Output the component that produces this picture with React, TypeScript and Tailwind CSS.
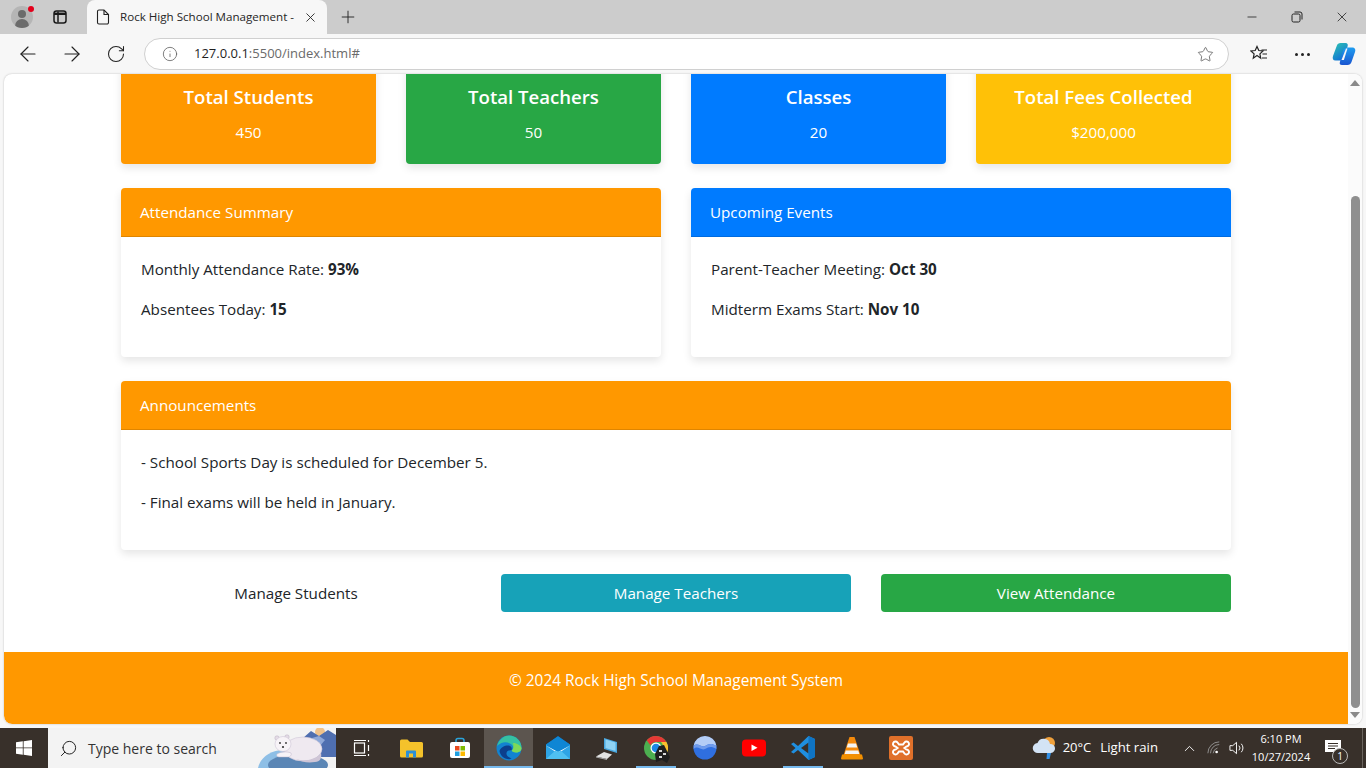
import { ArrowLeft, ArrowRight, ChevronUp, Info, Plus, RotateCw, Search, Star, X, Minus } from "lucide-react";
import type { ReactNode } from "react";

const stats = [
  { title: "Total Students", value: "450", color: "bg-[#ff9800]" },
  { title: "Total Teachers", value: "50", color: "bg-[#28a745]" },
  { title: "Classes", value: "20", color: "bg-[#007bff]" },
  { title: "Total Fees Collected", value: "$200,000", color: "bg-[#ffc107]" },
];

function Panel({ title, color, children }: { title: string; color: string; children: ReactNode }) {
  return (
    <div className="bg-white rounded-[4px] shadow-[0_4px_8px_rgba(0,0,0,0.1)] overflow-hidden">
      <div className={`h-[49px] flex items-center pl-[19px] pr-5 text-white border-b border-[rgba(0,0,0,0.125)] ${color}`}>{title}</div>
      <div className="h-[120px] px-5 pt-[20px] text-[#212529]">{children}</div>
    </div>
  );
}

function Row({ children }: { children: ReactNode }) {
  return <p className="h-[24px] mb-4 leading-[24px]">{children}</p>;
}

function BrowserChrome() {
  return (
    <div className="h-[74px] shrink-0 bg-[#f7f7f7]">
      {/* tab strip */}
      <div className="h-[34px] bg-[#cccccc] flex items-end relative">
        <div className="w-[87px] h-[34px] flex items-center shrink-0">
          <div className="relative ml-[11px] w-[22px] h-[22px] rounded-full bg-[#b5b5b5] overflow-hidden">
            <div className="absolute left-[7px] top-[4px] w-[8px] h-[8px] rounded-full bg-[#6b6b6b]" />
            <div className="absolute left-[4px] top-[13px] w-[14px] h-[10px] rounded-t-full bg-[#6b6b6b]" />
          </div>
          <div className="absolute left-[28px] top-[6px] w-[6px] h-[6px] rounded-full bg-[#e3001b]" />
          <svg className="ml-[19px]" width="16" height="16" viewBox="0 0 16 16" fill="none" stroke="#1a1a1a" strokeWidth="1.5">
            <rect x="2" y="2" width="12" height="12" rx="2.5" />
            <path d="M6 2.500v11" />
            <path d="M2 4.800h12" strokeWidth="2.400" />
          </svg>
        </div>
        <div className="w-[240px] h-[34px] bg-[#f7f7f7] rounded-t-lg flex items-center pl-[9px] pr-[9px] relative">
          <svg width="14" height="16" viewBox="0 0 14 16" fill="none" stroke="#222" strokeWidth="1.1">
            <path d="M1.500 2.500a1.500 1.500 0 0 1 1.500-1.500h5l4.500 4.500V13.500a1.500 1.500 0 0 1-1.500 1.500H3a1.500 1.500 0 0 1-1.500-1.500z" />
            <path d="M8 1v4.500h4.500" />
          </svg>
          <span className="ml-[10px] text-[11.6px] text-[#262626] whitespace-nowrap">Rock High School Management -</span>
          <X className="ml-auto text-[#222]" size={15} strokeWidth={1.4} />
        </div>
        <Plus className="ml-[11px] mb-[7px] text-[#222]" size={20} strokeWidth={1.1} />
        <div className="ml-auto h-[34px] flex items-center text-[#222]">
          <Minus size={14} strokeWidth={1.4} />
          <svg className="ml-[32px]" width="12" height="12" viewBox="0 0 12 12" fill="none" stroke="#222" strokeWidth="1">
            <rect x="1" y="3" width="8" height="8" rx="1.500" />
            <path d="M3.500 1h5.500a2 2 0 0 1 2 2v5.500" />
          </svg>
          <X className="ml-[31px] mr-[16px]" size={16} strokeWidth={1.2} />
        </div>
      </div>
      {/* address bar */}
      <div className="h-[40px] flex items-center text-[#222]">
        <ArrowLeft className="ml-[16px]" size={24} strokeWidth={1.15} />
        <ArrowRight className="ml-[20px]" size={24} strokeWidth={1.15} />
        <RotateCw className="ml-[22px]" size={20} strokeWidth={1.25} />
        <div className="ml-[18px] w-[1085px] h-[32px] rounded-full bg-white border border-[#d0d0d0] flex items-center pl-[17px] pr-[14px]">
          <Info className="text-[#5f5f5f]" size={16} strokeWidth={1.2} />
          <span className="ml-[16px] text-[13px] text-[#1f1f1f]">127.0.0.1<span className="text-[#6a6a6a]">:5500/index.html#</span></span>
          <Star className="ml-auto text-[#555]" size={17} strokeWidth={1.1} />
        </div>
        <svg className="ml-[21px]" width="18" height="18" viewBox="0 0 18 18" fill="none" stroke="#222" strokeWidth="1.2">
          <path d="M7 1.500l1.800 4 4.200.5-3.100 2.900.8 4.300L7 10.600l-3.700 2.600.8-4.300L1 6l4.200-.5z" />
          <path d="M11.500 5h5.500M12.500 9h4.500M12 13h5" />
        </svg>
        <div className="ml-[27px] flex gap-[3px]">
          <div className="w-[3px] h-[3px] rounded-full bg-[#222]" />
          <div className="w-[3px] h-[3px] rounded-full bg-[#222]" />
          <div className="w-[3px] h-[3px] rounded-full bg-[#222]" />
        </div>
        <svg className="ml-[22px]" width="24" height="24" viewBox="0 0 24 24">
          <defs>
            <linearGradient id="copilotLeft" x1="0" y1="0" x2="0.6" y2="1">
              <stop offset="0" stopColor="#2fc7b0" />
              <stop offset="1" stopColor="#0f6fd8" />
            </linearGradient>
            <linearGradient id="copilotRight" x1="0.5" y1="0" x2="0.5" y2="1">
              <stop offset="0" stopColor="#1f9df0" />
              <stop offset="1" stopColor="#1a55d0" />
            </linearGradient>
          </defs>
          <path d="M8.500 1h5c2 0 2.700 1.300 2.100 3.200L12.500 15c-.8 2.600-2 3.500-4 3.500H3.500C1 18.500.2 16.500 1 14L4.800 3.800C5.400 2 6.700 1 8.500 1z" fill="url(#copilotLeft)" />
          <path d="M15.500 5.500h4.500c2.800 0 4 2 3 4.500L19.500 20c-.7 2-2 3-4 3H10c-2 0-2.700-1-2.100-3L11 9c.7-2.300 2.200-3.500 4.500-3.500z" fill="url(#copilotRight)" />
          <path d="M14 6.500h1.500l-3.600 11.500H9.500z" fill="#f7f7f7" />
        </svg>
      </div>
    </div>
  );
}

function Page() {
  return (
    <div className="flex-1 min-h-0 flex px-[4px] pb-[4px] bg-[#f7f7f7]">
      <div className="flex-1 min-w-0 bg-white rounded-lg shadow-[0_0_2px_rgba(0,0,0,0.25)] overflow-hidden flex">
        <div className="flex-1 min-w-0 flex flex-col justify-end overflow-hidden font-['Open_Sans',sans-serif] text-[15.2px]">
          <div className="shrink-0 px-[117px]">
            <div className="grid grid-cols-4 gap-[30px]">
              {stats.map((s) => (
                <div key={s.title} className={`h-[120px] rounded-[4px] text-white text-center shadow-[0_4px_8px_rgba(0,0,0,0.1)] flex flex-col items-center pt-[41px] ${s.color}`}>
                  <h3 className="text-[18.6px] font-semibold leading-[24px]">{s.title}</h3>
                  <p className="mt-[11px] leading-[24px]">{s.value}</p>
                </div>
              ))}
            </div>
            <div className="grid grid-cols-2 gap-[30px] mt-[24px]">
              <Panel title="Attendance Summary" color="bg-[#ff9800]">
                <Row>Monthly Attendance Rate: <b>93%</b></Row>
                <Row>Absentees Today: <b>15</b></Row>
              </Panel>
              <Panel title="Upcoming Events" color="bg-[#007bff]">
                <Row>Parent-Teacher Meeting: <b>Oct 30</b></Row>
                <Row>Midterm Exams Start: <b>Nov 10</b></Row>
              </Panel>
            </div>
            <div className="mt-[24px]">
              <Panel title="Announcements" color="bg-[#ff9800]">
                <Row>- School Sports Day is scheduled for December 5.</Row>
                <Row>- Final exams will be held in January.</Row>
              </Panel>
            </div>
            <div className="grid grid-cols-3 gap-[30px] mt-[24px]">
              <div className="h-[38px] flex items-center justify-center text-[#212529]">Manage Students</div>
              <div className="h-[38px] rounded-[4px] bg-[#17a2b8] text-white flex items-center justify-center">Manage Teachers</div>
              <div className="h-[38px] rounded-[4px] bg-[#28a745] text-white flex items-center justify-center">View Attendance</div>
            </div>
          </div>
          <div className="shrink-0 mt-[40px] h-[72px] bg-[#ff9800] text-white text-[15.4px] leading-[24px] pt-[17px] text-center rounded-bl-lg">© 2024 Rock High School Management System</div>
        </div>
        {/* scrollbar */}
        <div className="w-[14px] shrink-0 bg-[#fbfbfb] flex flex-col items-center">
          <div className="mt-[6px] w-0 h-0 border-x-[5px] border-x-transparent border-b-[6px] border-b-[#8a8a8a]" />
          <div className="mt-[110px] w-[9px] flex-1 rounded-full bg-[#8f8f8f]" />
          <div className="mt-[4px] mb-[6px] w-0 h-0 border-x-[5px] border-x-transparent border-t-[6px] border-t-[#8a8a8a]" />
        </div>
      </div>
    </div>
  );
}

const apps: { key: string; icon: ReactNode; bar?: string; active?: boolean }[] = [
  {
    key: "taskview",
    icon: (
      <svg width="18" height="18" viewBox="0 0 18 18" fill="none" stroke="#fff" strokeWidth="1.2">
        <rect x="1.500" y="4" width="10" height="10" />
        <path d="M1 1.500h12M1 16.500h12M15.500 1v2M15.500 6v6M15.500 15v2" />
      </svg>
    ),
  },
  {
    key: "files",
    icon: (
      <svg width="24" height="20" viewBox="0 0 24 20">
        <path d="M1 3a1.500 1.500 0 0 1 1.500-1.500h6L11 4h11.500A1.500 1.500 0 0 1 24 5.500V18a1.500 1.500 0 0 1-1.500 1.500h-20A1.500 1.500 0 0 1 1 18z" fill="#f4c22b" />
        <path d="M7 19.500v-6a1 1 0 0 1 1-1h8a1 1 0 0 1 1 1v6h-3v-4h-4v4z" fill="#2b8fd6" />
      </svg>
    ),
  },
  {
    key: "store",
    icon: (
      <svg width="22" height="22" viewBox="0 0 22 22">
        <rect x="1" y="5" width="20" height="16" rx="2" fill="#fff" />
        <path d="M7 5V3.500A2 2 0 0 1 9 1.500h4a2 2 0 0 1 2 2V5" fill="none" stroke="#2aa5dc" strokeWidth="1.500" />
        <rect x="6" y="9" width="4.500" height="4.500" fill="#e8491d" />
        <rect x="11.500" y="9" width="4.500" height="4.500" fill="#7fba00" />
        <rect x="6" y="14.500" width="4.500" height="4.500" fill="#1f9fe0" />
        <rect x="11.500" y="14.500" width="4.500" height="4.500" fill="#fdb900" />
      </svg>
    ),
  },
  {
    key: "edge",
    active: true,
    bar: "w-full bg-[#76b9ed]",
    icon: (
      <svg width="26" height="26" viewBox="0 0 26 26">
        <circle cx="13" cy="13" r="12.500" fill="#1283d0" />
        <path d="M1 11C3 3.500 9 .5 13 .5 20 .5 25.500 6 25.500 13c0 3-2.500 4.500-5.500 4.500-2.500 0-4-1-4.500-2 2-1 2.500-3 1-5C14 7.500 9 6.500 5.500 8 3.500 8.800 2 10 1 11z" fill="#35c1a2" />
        <path d="M17 8c3 0 7 1.500 8.500 5 0 3-2.500 4.500-5.500 4.500-2 0-3.500-.7-4.500-2 2-1 2.500-4 1.500-7.500z" fill="#7ed957" />
        <path d="M12 10.500c3 0 4.500 2.500 3.500 5C14 15 10 15.500 10.500 19c.3 2 2.500 3.500 5 4.500-1 .5-2 .8-2.500.8-5 0-9-4-9.500-8.300C4.500 12.500 8.500 10.500 12 10.500z" fill="#0c3f8c" />
      </svg>
    ),
  },
  {
    key: "mail",
    icon: (
      <svg width="24" height="24" viewBox="0 0 24 24">
        <path d="M0 8.500 12 0l12 8.500V23H0z" fill="#0a78c8" />
        <path d="M0 9h24v14H0z" fill="#2ea4e6" />
        <path d="M0 9l12 8 12-8v-.5L12 .5 0 8.500z" fill="#0f86d4" />
        <path d="M3 9l9-6 9 6-9 6z" fill="#0f86d4" />
        <path d="M0 9.500 12 17.500 24 9.500 12 16z" fill="#fff" />
        <path d="M0 23 9.500 14.500 12 16l2.500-1.500L24 23z" fill="#4fc0f2" />
      </svg>
    ),
  },
  {
    key: "pc",
    icon: (
      <svg width="24" height="24" viewBox="0 0 24 24">
        <path d="M9 2l13 4v11L9 13z" fill="#4aa8e0" />
        <path d="M10.500 3.500l10 3v8.500l-10-3z" fill="#8fd2f4" />
        <path d="M9 16l8 2.500-5 4.500-11-2.500z" fill="#e3e3e3" />
        <path d="M1 20.500 12 23v1L1 21.500z" fill="#a8a8a8" />
      </svg>
    ),
  },
  {
    key: "chrome",
    bar: "w-[40px] bg-[#76b9ed]",
    icon: (
      <div className="relative w-[24px] h-[24px]">
        <svg width="24" height="24" viewBox="0 0 24 24">
          <circle cx="12" cy="12" r="12" fill="#4caf50" />
          <path d="M12 0a12 12 0 0 1 10.400 6H12a6 6 0 0 0-5.500 3.500L2.700 4.300A12 12 0 0 1 12 0z" fill="#e53935" />
          <path d="M22.400 6A12 12 0 0 1 12 24l5-9a6 6 0 0 0 0-9z" fill="#fbc02d" />
          <circle cx="12" cy="12" r="5.500" fill="#fff" />
          <circle cx="12" cy="12" r="4.300" fill="#1e88e5" />
        </svg>
        <svg className="absolute left-[9px] top-[8px]" width="18" height="20" viewBox="0 0 18 20">
          <path d="M3 18 2 10l4-8 5-1 3 6 3 6-3 6-5-3z" fill="#1f1f1f" />
          <path d="M6 6h3v2H6zM10 9h3v2h-3zM6 12h3v2H6z" fill="#d9d9d9" />
        </svg>
      </div>
    ),
  },
  {
    key: "earth",
    icon: (
      <svg width="24" height="24" viewBox="0 0 24 24">
        <circle cx="12" cy="12" r="11.500" fill="#2f6fe0" />
        <path d="M.6 10C5 6 8 12 12 10s6-3 11.400 0A11.500 11.500 0 0 0 .6 10z" fill="#b4cdf6" />
        <path d="M.6 13C5 9 8 15 12 13s6-3 11.400 0l-.1-3C18 7 16 8 12 10S5 6 .6 10z" fill="#6f9bec" />
      </svg>
    ),
  },
  {
    key: "youtube",
    icon: (
      <svg width="24" height="18" viewBox="0 0 24 18">
        <rect width="24" height="17" y="0.500" rx="4" fill="#f00" />
        <path d="M9.500 5.500v6.500l6-3.200z" fill="#fff" />
      </svg>
    ),
  },
  {
    key: "vscode",
    bar: "w-[40px] bg-[#76b9ed]",
    icon: (
      <svg width="24" height="24" viewBox="0 0 24 24">
        <path d="M17.500 0 24 3v18l-6.500 3L7 14l-4.500 3.500L0 16l4.500-4L0 8l2.500-1.500L7 10z" fill="#1f8fe0" />
        <path d="M17.500 6.500v11L10 12z" fill="#38302a" />
        <path d="M17.500 0 24 3v18l-6.500 3z" fill="#0f74c4" />
      </svg>
    ),
  },
  {
    key: "vlc",
    icon: (
      <svg width="22" height="24" viewBox="0 0 22 24">
        <path d="M8.500 1h5l6 18h-17z" fill="#f58a0b" />
        <path d="M7 7.500h8l1.300 4H5.700zM4.700 14.500h12.600l1 3.500H3.700z" fill="#f4f4f4" />
        <path d="M1 18.500h20l1 4a1 1 0 0 1-1 1H1a1 1 0 0 1-1-1z" fill="#f39000" />
      </svg>
    ),
  },
  {
    key: "xampp",
    icon: (
      <svg width="24" height="24" viewBox="0 0 24 24">
        <rect width="24" height="24" rx="2" fill="#e0702a" />
        <path d="M10 8.500 8.500 6.500a2.500 2.500 0 1 0-2 4l2 1.500-2 1.500a2.500 2.500 0 1 0 2 4l1.500-2h4l1.500 2a2.500 2.500 0 1 0 2-4l-2-1.500 2-1.500a2.500 2.500 0 1 0-2-4L14 8.500z" fill="none" stroke="#fff" strokeWidth="2" />
      </svg>
    ),
  },
];

function Taskbar() {
  return (
    <div className="h-[40px] shrink-0 bg-[#38302a] flex items-stretch text-white font-['Open_Sans',sans-serif]">
      <div className="w-[48px] flex items-center justify-center">
        <svg width="16" height="16" viewBox="0 0 16 16" fill="#fff">
          <path d="M0 2.300 6.800 1.300v6.200H0zM7.600 1.200 16 0v7.500H7.600zM0 8.300h6.800v6.400L0 13.700zM7.600 8.300H16V16l-8.400-1.200z" />
        </svg>
      </div>
      <div className="w-[288px] bg-[#f3f3f3] flex items-center pl-[11px] relative overflow-hidden">
        <Search className="text-[#222] -scale-x-100" size={19} strokeWidth={1.25} />
        <span className="ml-[10px] text-[14px] text-[#333]">Type here to search</span>
        {/* search box artwork */}
        <svg className="absolute right-0 top-0" width="80" height="40" viewBox="0 0 80 40">
          <circle cx="64" cy="4" r="5" fill="#f0c28a" />
          <path d="M38 18 55 3l8 5 9-6 8 5v22H46z" fill="#4f6fb0" />
          <path d="M56 10l7-2 6 4-5 6z" fill="#8fa8d8" />
          <path d="M2 40C4 30 14 22 28 22l24 4 16 14z" fill="#8ebfe6" />
          <ellipse cx="42" cy="37" rx="30" ry="11" fill="#5b86b5" />
          <ellipse cx="47" cy="21" rx="19" ry="12" fill="#efe9f0" stroke="#cfc6d6" strokeWidth="0.6" />
          <path d="M40 31c8 3 20 1 25-6 1 5-1 9-6 9-7 1-14 0-19-3z" fill="#cfc5d6" />
          <circle cx="21" cy="10" r="2.200" fill="#e4dce6" stroke="#b8aec0" strokeWidth="0.5" />
          <circle cx="31" cy="9" r="2.200" fill="#e4dce6" stroke="#b8aec0" strokeWidth="0.5" />
          <ellipse cx="27" cy="16" rx="8" ry="7.500" fill="#f7f3f7" stroke="#cfc6d6" strokeWidth="0.6" />
          <path d="M21 26c3-2 9-3 14-1 1 2-1 4-3 4H23c-2 0-3-2-2-3z" fill="#f7f3f7" stroke="#bfb5c8" strokeWidth="0.5" />
          <circle cx="24" cy="15" r="0.900" fill="#333" />
          <circle cx="30" cy="15" r="0.900" fill="#333" />
          <circle cx="27" cy="19" r="1.100" fill="#333" />
        </svg>
      </div>
      <div className="flex ml-[1px]">
        {apps.map((a) => (
          <div key={a.key} className={`w-[49px] relative flex items-center justify-center ${a.active ? "bg-[#5c554f]" : ""}`}>
            {a.icon}
            {a.bar && <div className={`absolute bottom-0 h-[2px] ${a.bar}`} />}
          </div>
        ))}
      </div>
      <div className="ml-auto flex items-center">
        <svg width="26" height="26" viewBox="0 0 26 26">
          <circle cx="18" cy="8" r="6" fill="#f0a13c" />
          <path d="M7 18a5 5 0 0 1-.5-10 6.500 6.500 0 0 1 12.500 1 4.500 4.500 0 0 1 1 9z" fill="#d3e3f5" />
          <path d="M16 18h4l-1.500 6h-3z" fill="#2f8de4" />
        </svg>
        <span className="ml-[6px] text-[13px]">20°C</span>
        <span className="ml-[9px] text-[13.2px]">Light rain</span>
        <ChevronUp className="ml-[23px]" size={17} strokeWidth={1.3} />
        <svg className="ml-[9px]" width="14" height="14" viewBox="0 0 16 16" fill="none" stroke="#9a9a9a" strokeWidth="1">
          <path d="M1 14A13 13 0 0 1 14 1M4 14a10 10 0 0 1 10-10M7 14a7 7 0 0 1 5-6" />
          <circle cx="11" cy="12.500" r="1.500" fill="#fff" stroke="none" />
        </svg>
        <svg className="ml-[8px]" width="16" height="16" viewBox="0 0 17 16" fill="none" stroke="#fff" strokeWidth="1">
          <path d="M1 5.500h3L8 2v12L4 10.500H1z" />
          <path d="M10.500 5.500a3.500 3.500 0 0 1 0 5M13 3.500a6.500 6.500 0 0 1 0 9" />
        </svg>
        <div className="w-[72px] text-center text-[11px] leading-[18px]">
          <div>6:10 PM</div>
          <div>10/27/2024</div>
        </div>
        <div className="ml-[3px] w-[42px] h-[40px] relative flex items-center">
          <svg className="ml-[5px]" width="16" height="16" viewBox="0 0 16 16">
            <path d="M0 0h16v12h-5l-3 3v-3H0z" fill="#fff" />
            <path d="M3 3.500h10M3 6h10M3 8.500h7" stroke="#38302a" strokeWidth="1" />
          </svg>
          <div className="absolute left-[12px] top-[20px] w-[16px] h-[16px] rounded-full bg-[#38302a] border border-[#bbb] text-[10px] leading-[14px] text-center">1</div>
        </div>
        <div className="w-[4px] h-full border-l border-[#6a645e]" />
      </div>
    </div>
  );
}

export default function App() {
  return (
    <div className="w-[1366px] h-[768px] overflow-hidden flex flex-col font-['Open_Sans',sans-serif]">
      <BrowserChrome />
      <Page />
      <Taskbar />
    </div>
  );
}
